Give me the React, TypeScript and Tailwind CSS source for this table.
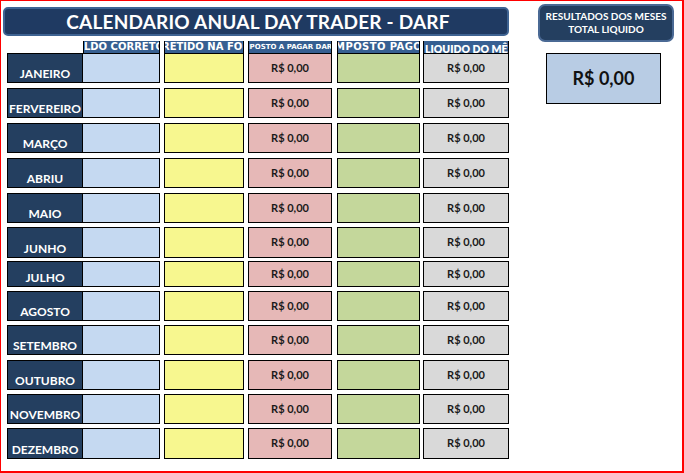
import React from 'react';

interface MonthRow {
  name: string;
  h: string;
  mt: string;
}

const months: MonthRow[] = [
  { name: 'JANEIRO', h: 'h-[30px]', mt: 'mt-0' },
  { name: 'FERVEREIRO', h: 'h-[30px]', mt: 'mt-[5px]' },
  { name: 'MARÇO', h: 'h-[30px]', mt: 'mt-[5px]' },
  { name: 'ABRIU', h: 'h-[30px]', mt: 'mt-[5px]' },
  { name: 'MAIO', h: 'h-[30px]', mt: 'mt-[5px]' },
  { name: 'JUNHO', h: 'h-[31px]', mt: 'mt-[4px]' },
  { name: 'JULHO', h: 'h-[26px]', mt: 'mt-[3px]' },
  { name: 'AGOSTO', h: 'h-[30px]', mt: 'mt-[4px]' },
  { name: 'SETEMBRO', h: 'h-[30px]', mt: 'mt-[4px]' },
  { name: 'OUTUBRO', h: 'h-[30px]', mt: 'mt-[5px]' },
  { name: 'NOVEMBRO', h: 'h-[30px]', mt: 'mt-[4px]' },
  { name: 'DEZEMBRO', h: 'h-[31px]', mt: 'mt-[4px]' },
];

const money = 'R$ 0,00';

const App: React.FC = () => {
  return (
    <div
      className="w-[684px] h-[473px] bg-white border-t border-l border-r-2 border-b-2 border-[#ff0000] flex overflow-hidden"
      style={{ fontFamily: 'Lato, "Open Sans", sans-serif' }}
    >
      {/* Left side: title + monthly table */}
      <div className="w-[510px] pl-[2px] pt-[6px] flex flex-col">
        <div className="w-[506px] h-[29px] rounded-[5px] bg-[#1f3a62] border-2 border-[#3e6392] flex items-center justify-center">
          <span className="text-white font-bold text-[19px] leading-none tracking-[0.2px] ml-[4px]">
            CALENDARIO ANUAL DAY TRADER - DARF
          </span>
        </div>

        <div className="ml-[4px] mt-[5px] flex flex-col">
          {/* Column headers (clipped like the spreadsheet cells) */}
          <div className="flex h-[12px] text-white font-bold" style={{ fontFamily: '"DejaVu Sans", sans-serif' }}>
            <div className="ml-[76px] w-[77px] bg-[#365f91] border-x border-black overflow-hidden whitespace-nowrap text-[10px] leading-[12px]">
              <span className="inline-block ml-[-15px]">SALDO CORRETORA</span>
            </div>
            <div className="ml-[4px] w-[80px] bg-[#365f91] border-x border-black overflow-hidden whitespace-nowrap text-[10px] leading-[12px]">
              <span className="inline-block ml-[-3px]">RETIDO NA FONTE</span>
            </div>
            <div className="ml-[4px] w-[84px] bg-[#365f91] border-x border-black overflow-hidden whitespace-nowrap text-[7px] leading-[12px]">
              <span className="inline-block ml-[-9px]">IMPOSTO A PAGAR DARF</span>
            </div>
            <div className="ml-[5px] w-[83px] bg-[#365f91] border-x border-black overflow-hidden whitespace-nowrap text-[10px] leading-[12px]">
              <span className="inline-block ml-[-7px] tracking-[0.4px]">IMPOSTO PAGO</span>
            </div>
            <div className="ml-[3px] w-[86px] bg-[#365f91] border-x border-black overflow-hidden whitespace-nowrap leading-[12px]" style={{ fontFamily: 'Lato, sans-serif' }}>
              <span className="inline-block ml-[1px] text-[10.5px] font-extrabold">LIQUIDO DO MÊS</span>
            </div>
          </div>

          {/* Month rows */}
          {months.map((m) => (
            <div key={m.name} className={`flex ${m.h} ${m.mt}`}>
              <div className="w-[153px] h-full flex border border-black">
                <div className="w-[75px] h-full bg-[#243f60] border-r border-black flex items-end justify-center pb-[1px]">
                  <span className="text-white font-bold text-[12px] leading-[14px]">{m.name}</span>
                </div>
                <div className="flex-1 h-full bg-[#c5d9f1]" />
              </div>
              <div className="ml-[4px] w-[80px] h-full bg-[#f7f78f] border border-black" />
              <div className="ml-[4px] w-[84px] h-full bg-[#e6b8b7] border border-black flex items-center justify-center">
                <span className="text-[11px] font-bold text-[#1a1a1a]">{money}</span>
              </div>
              <div className="ml-[5px] w-[83px] h-full bg-[#c4d79b] border border-black" />
              <div className="ml-[3px] w-[86px] h-full bg-[#d9d9d9] border border-black flex items-center justify-center">
                <span className="text-[11px] font-bold text-[#1a1a1a]">{money}</span>
              </div>
            </div>
          ))}
        </div>
      </div>

      {/* Right side: totals */}
      <div className="pl-[27px] pt-[3px] flex flex-col">
        <div className="w-[136px] h-[38px] rounded-[7px] bg-[#243f60] border-2 border-[#4a6994] flex flex-col items-center justify-center">
          <span className="text-white font-bold text-[10px] leading-[13px]">RESULTADOS DOS MESES</span>
          <span className="text-white font-bold text-[10px] leading-[13px]">TOTAL LIQUIDO</span>
        </div>
        <div className="ml-[8px] mt-[11px] w-[115px] h-[51px] bg-[#b8cce4] border border-black flex items-center justify-center">
          <span className="text-[18px] font-bold text-[#111]">{money}</span>
        </div>
      </div>
    </div>
  );
};

export default App;
